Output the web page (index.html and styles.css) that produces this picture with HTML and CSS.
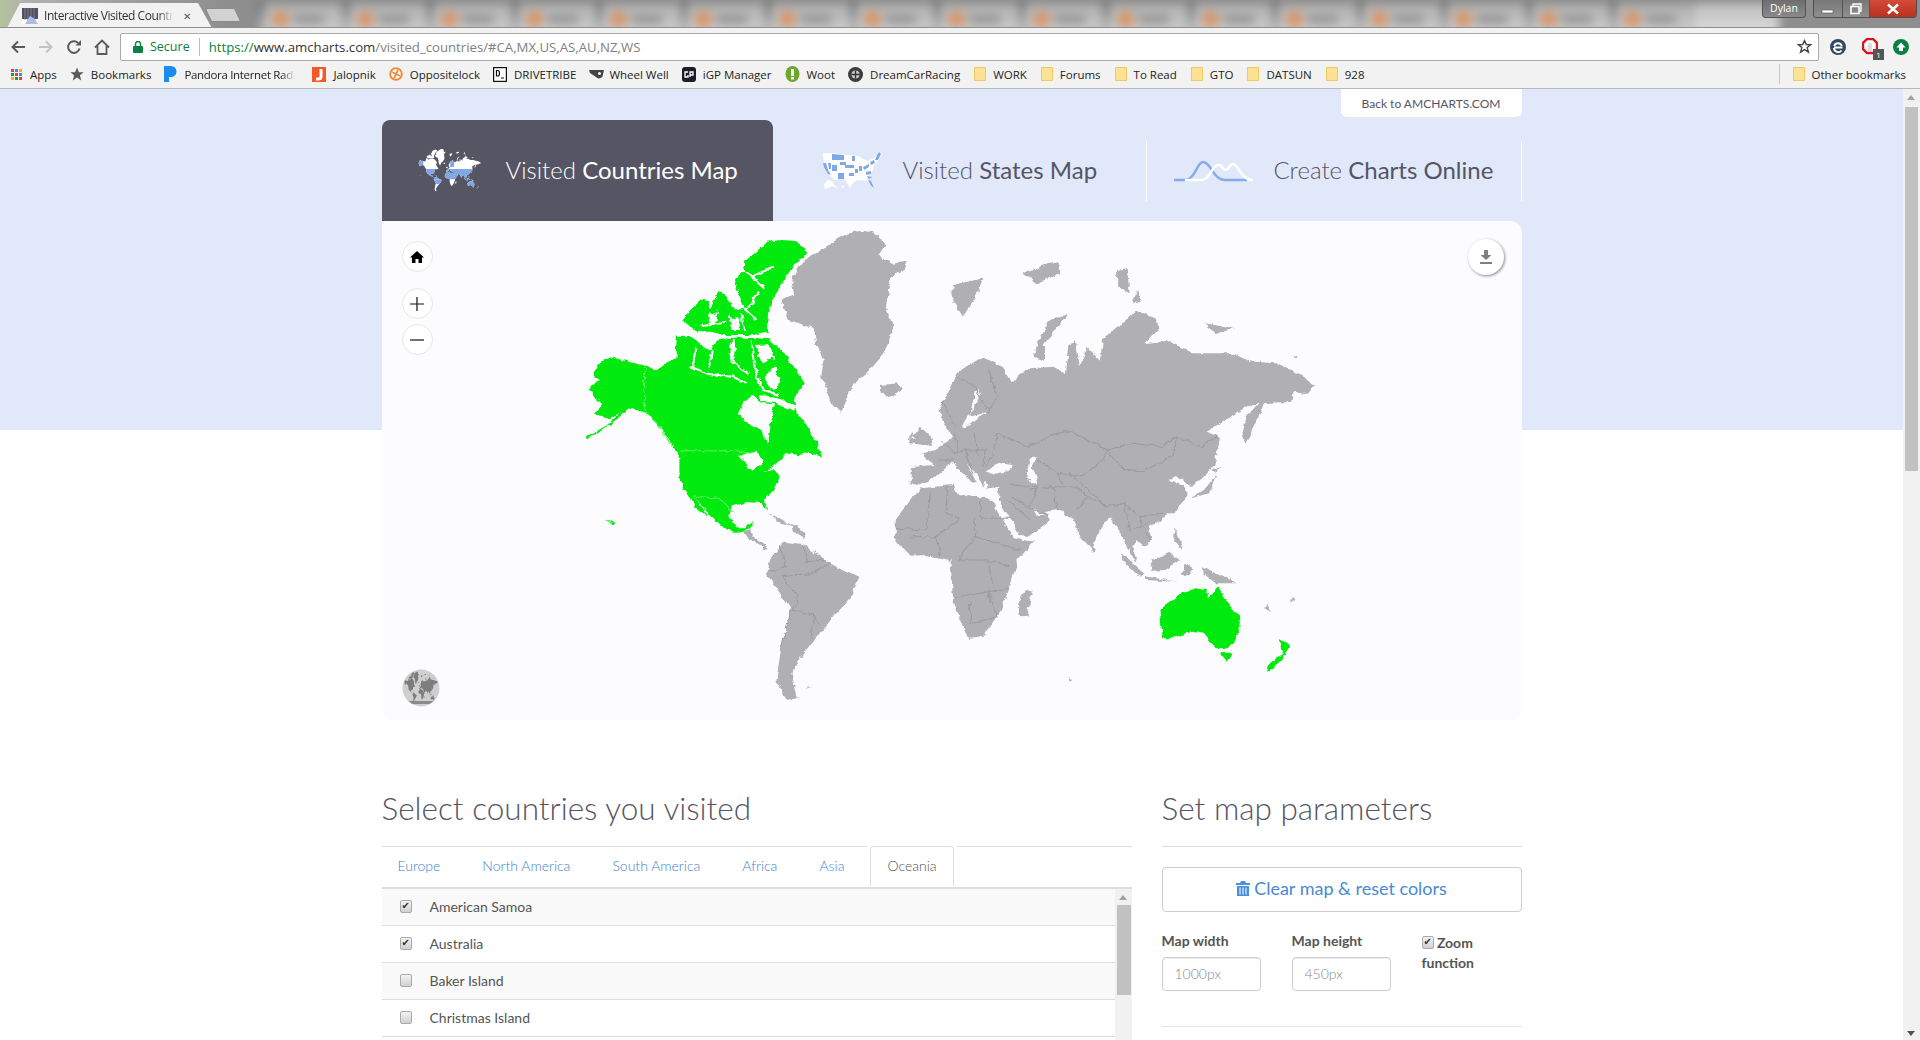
FILE: index.html
```html
<!DOCTYPE html>
<html lang="en">
<head>
<meta charset="utf-8">
<title>Interactive Visited Countries Map</title>
<link rel="stylesheet" href="styles.css">
</head>
<body>
<svg class="defs" width="0" height="0" aria-hidden="true">
  <defs>
    <filter id="coast" x="-2%" y="-2%" width="104%" height="104%">
      <feTurbulence type="fractalNoise" baseFrequency="0.07 0.05" numOctaves="3" seed="7"/>
      <feDisplacementMap in="SourceGraphic" scale="13" xChannelSelector="R" yChannelSelector="G"/>
      <feGaussianBlur stdDeviation="0.5 0.4"/>
    </filter>
    <g id="land-grey">
      <path d="M590 35L612 32L632 38L655 75L640 105L668 132L697 125L690 150L665 172L660 225L655 262L670 320L652 400L620 455L590 490L565 580L545 550L525 470L530 420L515 370L510 325L460 300L445 240L470 222L465 180L490 120L520 95L555 55Z"/>
      <path d="M705 742L725 738L755 735L735 712L728 700L755 690L775 665L790 650L770 605L763 570L775 530L800 455L850 410L888 440L912 490L890 522L920 470L940 445L990 440L1015 462L1022 375L1037 365L1045 440L1060 380L1085 422L1092 358L1160 272L1195 290L1206 320L1175 370L1225 362L1270 400L1345 400L1395 425L1440 430L1490 465L1518 495L1500 522L1475 515L1470 545L1415 550L1400 600L1378 672L1372 640L1380 590L1405 548L1380 560L1298 635L1325 650L1320 700L1312 745L1272 800L1240 768L1225 780L1255 800L1262 825L1240 868L1210 898L1182 920L1190 960L1175 980L1160 960L1150 980L1162 1032L1150 1012L1125 935L1105 890L1078 950L1070 990L1048 958L1035 905L1005 870L975 875L985 900L945 948L925 945L882 840L885 800L860 805L855 780L858 770L850 800L840 770L818 730L838 790L825 785L800 745L790 725L775 745L755 772L722 795L705 790Z"/>
      <path d="M675 900L700 845L725 805L790 795L800 825L860 835L868 840L912 955L952 965L920 1020L905 1100L880 1190L850 1250L820 1257L790 1140L785 1020L735 1005L705 1007L675 960Z"/>
      <path d="M420 1020L450 965L490 972L540 1030L602 1070L585 1130L550 1190L510 1260L490 1300L465 1360L478 1435L455 1440L435 1380L445 1280L465 1170L415 1060Z"/>
      <path d="M368 935L385 928L387 948L420 985L412 987L375 952Z"/>
      <path d="M418 880L455 905L470 920L440 905ZM468 915L495 935L490 955L470 935Z"/>
      <path d="M935 1110L948 1115L940 1190L925 1192L920 1150Z"/>
      <path d="M645 495L680 490L688 510L660 533L645 515Z"/>
      <path d="M725 620L745 650L750 678L700 670L715 640ZM708 635L700 660L715 655Z"/>
      <path d="M1320 760L1305 820L1270 835L1300 800ZM1310 750L1330 740L1318 755Z"/>
      <path d="M790 195L850 175L840 220L810 290L785 230Z"/>
      <path d="M930 160L975 135L1005 125L1005 160L960 190Z"/>
      <path d="M1020 282L985 300L960 370L952 410L975 422L975 370Z"/>
      <path d="M1120 150L1140 145L1145 220L1120 200ZM1160 210L1170 245L1150 250Z"/>
      <path d="M1295 310L1355 325L1320 340ZM1470 410L1485 405L1480 415Z"/>
      <path d="M1130 1000L1175 1060L1165 1070L1130 1020Z"/>
      <path d="M1172 1068L1240 1085L1175 1080Z"/>
      <path d="M1185 1025L1225 995L1245 1020L1215 1050L1190 1052Z"/>
      <path d="M1255 1030L1275 1045L1260 1070L1250 1060Z"/>
      <path d="M1290 1040L1360 1090L1320 1090L1295 1060Z"/>
      <path d="M1235 920L1255 990L1235 965Z"/>
      <path d="M1065 975L1075 985L1070 998Z"/>
      <path d="M1415 1165L1430 1175L1420 1155ZM1465 1140L1480 1135L1475 1145ZM1020 1375L1030 1380L1025 1385ZM495 1400L508 1398L500 1405Z"/>
    </g>
    <g id="land-green">
      <path d="M55 655L95 618L125 575L100 595L68 582L85 555L70 535L60 510L62 492L78 480L65 458L82 425L105 410L130 422L168 435L195 450L215 430L232 415L235 345L262 345L285 375L305 395L315 362L345 352L370 350L420 358L455 405L470 440L492 490L470 540L480 590L490 600L505 640L515 665L527 712L500 698L480 705L455 700L435 735L408 757L432 748L442 770L430 810L410 838L417 872L405 850L378 846L345 860L340 890L358 925L372 925L385 903L385 925L368 935L355 938L325 920L300 885L270 828L298 890L270 860L240 782L240 715L228 680L200 620L172 578L138 565L105 610Z"/>
      <path d="M245 300L262 270L290 232L302 268L318 215L335 225L350 268L372 268L352 195L350 180L370 155L370 125L395 95L415 65L445 60L470 62L492 85L495 102L470 135L455 170L440 205L425 245L420 285L418 335L385 345L290 345L260 320Z"/>
      <path d="M92 898L100 902L112 915L106 915Z"/>
      <path d="M1205 1170L1250 1120L1275 1105L1300 1110L1300 1135L1325 1100L1340 1145L1365 1190L1367 1240L1345 1285L1320 1285L1295 1240L1275 1232L1225 1255L1212 1255Z"/>
      <path d="M1325 1300L1350 1298L1340 1325Z"/>
      <path d="M1445 1255L1468 1280L1450 1320L1425 1355L1420 1340L1455 1300Z"/>
    </g>
    <clipPath id="band">
      <rect x="0" y="700" width="1568" height="340"/>
      <rect x="60" y="430" width="110" height="180"/>
      <rect x="800" y="430" width="90" height="200"/>
      <rect x="1190" y="1060" width="200" height="300"/>
      <rect x="400" y="1050" width="200" height="150"/>
    </clipPath>
  </defs>
</svg>

<header class="chrome">
  <div class="strip">
    <div class="strip-tab">
      <svg class="fav" width="16" height="16" viewBox="0 0 16 16"><rect width="16" height="16" fill="#fff"/><rect width="16" height="11" fill="#50505f"/><path d="M3 0v12M6 0v12M9 0v12M12 0v12" stroke="#7c7c8c"/><path d="M3 16L8 8L13 11L16 16Z" fill="#a9bde6"/></svg>
      <span class="strip-title">Interactive Visited Countr</span>
      <span class="strip-close">✕</span>
    </div>
    <div class="strip-new"></div>
    <div class="blur-tabs">
      <div class="bt"><i></i><b></b></div><div class="bt"><i></i><b></b></div><div class="bt"><i></i><b></b></div><div class="bt"><i></i><b></b></div><div class="bt"><i></i><b></b></div><div class="bt"><i></i><b></b></div><div class="bt"><i></i><b></b></div><div class="bt"><i></i><b></b></div><div class="bt"><i></i><b></b></div><div class="bt"><i></i><b></b></div><div class="bt"><i></i><b></b></div><div class="bt"><i></i><b></b></div><div class="bt"><i></i><b></b></div><div class="bt"><i></i><b></b></div><div class="bt"><i></i><b></b></div><div class="bt"><i></i><b></b></div><div class="bt"><i></i><b></b></div><div class="bt bt-empty"></div>
    </div>
    <div class="winbar">
      <span class="profile">Dylan</span>
      <div class="winctl">
        <span class="wc wc-min"><svg width="14" height="10" viewBox="0 0 14 10"><rect x="1" y="6" width="11" height="3" fill="#fff" stroke="#555" stroke-width=".6"/></svg></span>
        <span class="wc wc-max"><svg width="14" height="12" viewBox="0 0 14 12"><path d="M4 3V1H12V8H10" fill="none" stroke="#fff" stroke-width="1.4"/><rect x="2" y="3.5" width="8" height="7" fill="none" stroke="#fff" stroke-width="1.6"/></svg></span>
        <span class="wc wc-close"><svg width="14" height="12" viewBox="0 0 14 12"><path d="M2 1.5L12 10.5M12 1.5L2 10.5" stroke="#fff" stroke-width="2.6"/></svg></span>
      </div>
    </div>
  </div>
  <div class="toolbar">
    <svg class="nav" width="16" height="16" viewBox="0 0 16 16"><path d="M15 8H3M8 2.5L2.5 8L8 13.5" fill="none" stroke="#5a5a5a" stroke-width="2"/></svg>
    <svg class="nav" width="16" height="16" viewBox="0 0 16 16"><path d="M1 8H13M8 2.5L13.5 8L8 13.5" fill="none" stroke="#c4c4c4" stroke-width="2"/></svg>
    <svg class="nav" width="16" height="16" viewBox="0 0 16 16"><path d="M13.5 9.5A5.8 5.8 0 1 1 12 4" fill="none" stroke="#5a5a5a" stroke-width="2"/><path d="M9.5 6.5H15V1Z" fill="#5a5a5a"/></svg>
    <svg class="nav" width="16" height="16" viewBox="0 0 16 16"><path d="M1 8.5L8 1.5L15 8.5M3.5 7V15H12.500V7" fill="none" stroke="#5a5a5a" stroke-width="1.8"/></svg>
    <div class="omnibox">
      <svg width="10" height="12" viewBox="0 0 10 12"><rect y="5" width="10" height="7" rx="1" fill="#0b8043"/><path d="M2.500 5.500V3a2.500 2.500 0 0 1 5 0V5.500" fill="none" stroke="#0b8043" stroke-width="1.400"/></svg>
      <span class="secure">Secure</span>
      <span class="url"><span class="u-https">https://</span><span class="u-host">www.amcharts.com</span><span class="u-path">/visited_countries/#CA,MX,US,AS,AU,NZ,WS</span></span>
      <svg class="star" width="15" height="15" viewBox="0 0 24 24"><path d="M12 2.500L14.900 9H22L16.300 13.700L18.300 21L12 16.900L5.700 21L7.700 13.700L2 9H9.100Z" fill="none" stroke="#444" stroke-width="2.200"/></svg>
    </div>
    <div class="exts">
      <svg width="18" height="18" viewBox="0 0 18 18"><circle cx="9" cy="9" r="8" fill="#2f4a63"/><path d="M13.500 9.500H5M5.200 8A4 4 0 0 1 12.800 8M5 10A4.200 4.200 0 0 0 12.500 12.500" fill="none" stroke="#fff" stroke-width="2"/></svg>
      <span class="ext-block"><svg width="16" height="18" viewBox="0 0 16 18"><path d="M5 1H11L15 5V11L11 15H5L1 11V5Z" fill="#fff" stroke="#d8161c" stroke-width="2.400"/><path d="M6 13V6L8 4L10 6V13Z" fill="#ddd"/></svg><span class="ext-badge">1</span></span>
      <svg width="16" height="16" viewBox="0 0 16 16"><circle cx="8" cy="8" r="8" fill="#0b8043"/><path d="M8 3.500L12.500 8.500H10V12H6V8.500H3.500Z" fill="#fff"/></svg>
    </div>
  </div>
  <div class="bookmarks">
    <span class="bm"><svg width="13" height="13" viewBox="0 0 13 13"><path d="M1 1h3v3H1z" fill="#db4437"/><path d="M5 1h3v3H5z" fill="#4285f4"/><path d="M9 1h3v3H9z" fill="#f4b400"/><path d="M1 5h3v3H1z" fill="#0f9d58"/><path d="M5 5h3v3H5z" fill="#db4437"/><path d="M9 5h3v3H9z" fill="#4285f4"/><path d="M1 9h3v3H1z" fill="#f4b400"/><path d="M5 9h3v3H5z" fill="#0f9d58"/><path d="M9 9h3v3H9z" fill="#db4437"/></svg>Apps</span>
    <span class="bm"><svg width="14" height="14" viewBox="0 0 24 24"><path d="M12 1L15.300 9H23.500L17 14.300L19.200 23L12 18L4.800 23L7 14.300L.5 9H8.700Z" fill="#5a5a5a"/></svg>Bookmarks</span>
    <span class="bm bm-fade"><svg width="13" height="16" viewBox="0 0 13 16"><path d="M0 0H7A5.500 5.500 0 0 1 7 11H5V16H0Z" fill="#1a8cf0"/></svg><span class="bm-clip">Pandora Internet Radi</span></span>
    <span class="bm"><svg width="14" height="15" viewBox="0 0 14 15"><rect width="14" height="15" fill="#f15a24"/><path d="M9 2V10Q9 12 6 12H4" fill="none" stroke="#fff" stroke-width="3"/></svg>Jalopnik</span>
    <span class="bm"><svg width="14" height="14" viewBox="0 0 14 14"><circle cx="7" cy="7" r="5.800" fill="#fff" stroke="#f08a3c" stroke-width="2"/><path d="M3 5L11 9M9 3L5 11" stroke="#f08a3c" stroke-width="1.800"/></svg>Oppositelock</span>
    <span class="bm"><svg width="14" height="15" viewBox="0 0 14 15"><rect x=".6" y=".6" width="12.800" height="13.800" fill="#fff" stroke="#111" stroke-width="1.200"/><path d="M3.500 3.500V9H5Q6.500 9 6.500 6.200Q6.500 3.500 5 3.500ZM8 11H11" fill="none" stroke="#111" stroke-width="1.200"/></svg>DRIVETRIBE</span>
    <span class="bm bm-tight"><svg width="15" height="10" viewBox="0 0 15 10"><path d="M0 1H15L14 5A4 4 0 0 1 7 8L1 4Z" fill="#444"/><circle cx="10.500" cy="4.500" r="1.500" fill="#fff"/></svg>Wheel Well</span>
    <span class="bm"><svg width="14" height="15" viewBox="0 0 14 15"><rect width="14" height="15" rx="3" fill="#1c1c2a"/><path d="M6 5H3V10H6V8M8 10V5H11V8H8" fill="none" stroke="#fff" stroke-width="1.300"/></svg>iGP Manager</span>
    <span class="bm"><svg width="15" height="16" viewBox="0 0 15 16"><ellipse cx="7.500" cy="8" rx="7" ry="8" fill="#6aa82c"/><rect x="6" y="3" width="3" height="7" fill="#fff"/><rect x="6" y="11" width="3" height="2.500" fill="#fff"/></svg>Woot</span>
    <span class="bm"><svg width="15" height="15" viewBox="0 0 15 15"><circle cx="7.500" cy="7.500" r="7.500" fill="#3c3c3c"/><circle cx="7.500" cy="7.500" r="4" fill="#ccc"/><path d="M7.500 3.500V11.500M3.500 7.500H11.500" stroke="#333" stroke-width="1.400"/></svg>DreamCarRacing</span>
    <span class="bm bm-f"><svg class="folder" width="12" height="14" viewBox="0 0 12 14"><path d="M.5 .5H11.500V13.500H.5Z" fill="#fde293" stroke="#f1c95e"/></svg>WORK</span>
    <span class="bm bm-f"><svg class="folder" width="12" height="14" viewBox="0 0 12 14"><path d="M.5 .5H11.500V13.500H.5Z" fill="#fde293" stroke="#f1c95e"/></svg>Forums</span>
    <span class="bm bm-f"><svg class="folder" width="12" height="14" viewBox="0 0 12 14"><path d="M.5 .5H11.500V13.500H.5Z" fill="#fde293" stroke="#f1c95e"/></svg>To Read</span>
    <span class="bm bm-f"><svg class="folder" width="12" height="14" viewBox="0 0 12 14"><path d="M.5 .5H11.500V13.500H.5Z" fill="#fde293" stroke="#f1c95e"/></svg>GTO</span>
    <span class="bm bm-f"><svg class="folder" width="12" height="14" viewBox="0 0 12 14"><path d="M.5 .5H11.500V13.500H.5Z" fill="#fde293" stroke="#f1c95e"/></svg>DATSUN</span>
    <span class="bm bm-f"><svg class="folder" width="12" height="14" viewBox="0 0 12 14"><path d="M.5 .5H11.500V13.500H.5Z" fill="#fde293" stroke="#f1c95e"/></svg>928</span>
    <span class="bm bm-other"><svg class="folder" width="12" height="14" viewBox="0 0 12 14"><path d="M.5 .5H11.500V13.500H.5Z" fill="#fde293" stroke="#f1c95e"/></svg>Other bookmarks</span>
  </div>
</header>

<div class="viewport">
  <main class="page">
    <div class="wrap">
      <div class="backrow"><a class="back">Back to AMCHARTS.COM</a></div>
      <nav class="maptabs">
        <div class="mt mt-1 is-active">
          <svg class="ic-world" width="67" height="45" viewBox="0 0 1568 1500" preserveAspectRatio="none"><use href="#land-grey" fill="#fff"/><use href="#land-green" fill="#fff"/><g clip-path="url(#band)"><use href="#land-grey" fill="#7fa9e6"/><use href="#land-green" fill="#7fa9e6"/></g></svg>
          <span><span class="lt">Visited</span> Countries Map</span>
        </div>
        <div class="mt mt-2">
          <svg class="ic-us" width="60" height="38" viewBox="0 0 60 38">
            <path d="M1 1L12 1L26 3L36 4L41 7L46 9L52 6L57 0L60 2L56 9L52 13L51 18L48 23L44 26L49 31L52 36L49 35L46 29L35 28L31 31L28 36L25 31L22 26L13 28L7 23L2 14Z" fill="#fff"/>
            <path d="M10 2L22 3L22 8L10 8ZM1 11L4 11L6 18L9 23L6 22L2 15ZM6 11L9 11L9 17L7 17ZM10 13L15 13L15 19L10 19ZM16 21L22 21L22 27L16 27ZM18 10L24 10L24 13L18 13ZM23 13L32 13L32 16L23 16ZM30 4L33 4L33 9L30 9ZM27 21L32 21L32 24L27 24ZM33 17L36 17L36 21L33 21ZM37 14L40 14L40 19L37 19ZM41 15L47 12L47 15L42 18ZM44 20L49 19L49 22L44 23ZM45 24L50 25L47 27ZM46 28L49 29L52 36L49 34ZM53 8L55 3L57 0L59 2L56 8ZM48 10L52 8L53 11L49 13Z" fill="#7fa9e6"/>
            <path d="M2 32L6 28L10 29L12 33L17 37L10 34L3 37ZM19 34L22 34L21 36Z" fill="#fff"/>
          </svg>
          <span><span class="lt">Visited</span> States Map</span>
        </div>
        <div class="mt mt-3">
          <svg class="ic-chart" width="81" height="22" viewBox="0 0 81 22">
            <path d="M1 20H12C22 20 24 2 30 2C38 2 40 20 52 20H68C72 20 73 20 74 20" fill="none" stroke="#82ade8" stroke-width="2.500"/>
            <path d="M12 20H28C38 20 38 5 46 5C50 5 49 10 53 10C56 10 56 4 60 4C65 4 68 20 80 20" fill="none" stroke="#fff" stroke-width="2.500"/>
          </svg>
          <span><span class="lt">Create</span> Charts Online</span>
        </div>
      </nav>

      <section class="mapcard">
        <svg class="worldmap" width="780" height="500" viewBox="0 0 1568 1500" preserveAspectRatio="none">
          <g filter="url(#coast)">
            <use href="#land-grey" class="land"/>
            <g class="sea">
              <path d="M838 505L845 525L822 590L838 585L860 575L835 600L815 625L806 622L825 575Z"/>
              <path d="M858 755L880 728L905 735L905 752L870 762Z"/>
              <path d="M945 715L958 712L950 740L962 790L945 790L938 760Z"/>
              <path d="M950 865L975 885L960 890Z"/>
            </g>
            <g class="borders">
              <path d="M880 640L940 680L1000 640L1025 632L1060 660L1100 690L1150 670L1210 680L1240 650L1290 680L1320 650"/>
              <path d="M1100 690L1135 750L1170 755L1230 710L1240 650"/>
              <path d="M1025 760L1060 810L1100 860L1135 850L1165 890L1210 880M960 720L1000 760L1050 770L1090 720L1100 690"/>
              <path d="M945 810L990 800L1000 870M990 800L1040 800L1060 830L1040 870M1000 760L1015 800M1060 830L1100 860"/>
              <path d="M1135 850L1145 935M1165 890L1185 960M1185 905L1155 930"/>
              <path d="M880 640L870 700L855 740M770 665L795 700L815 690L860 690M795 640L800 700M815 690L830 760M835 640L840 710M855 690L850 740M760 720L790 720"/>
              <path d="M770 545L795 620M800 470L830 495L860 570M860 450L880 530L860 580"/>
              <path d="M905 795L960 800L945 860L905 830M935 860L980 885M900 840L945 900"/>
              <path d="M745 815L735 930L675 925M780 800L775 880L805 895M845 835V895L915 895M805 895L755 950L705 950M835 950L835 895M755 950L765 1005M835 950L800 1020M835 950L925 990M800 1020L860 1020L870 1090M860 1020L905 1040M795 1135L860 1115L905 1105M825 1140L825 1210L880 1190M860 1115L880 1190"/>
              <path d="M440 975L455 1040L415 1055M490 975L495 1025L530 1020M540 1030L510 1060L445 1070L480 1130L470 1170L510 1185L520 1215M465 1170L445 1280M510 1185L505 1255"/>
            </g>
            <use href="#land-green" class="green"/>
            <path class="green-tail" d="M55 655L95 618L125 578"/>
            <g class="sea">
              <path d="M358 580L368 545L388 525L402 550L430 552L424 610L418 672L405 632L378 612Z"/>
              <path d="M400 525L432 530L478 560L470 575L430 548L405 545Z"/>
              <path d="M410 470L432 440L445 490L425 510Z"/>
              <path d="M360 705L395 695L412 720L400 735L385 755L370 720Z"/>
              <path d="M420 740L480 700L460 725Z"/>
              <path d="M300 275L318 300L300 320Z"/>
              <path d="M340 300L360 290L362 330L345 330Z"/>
              <path d="M270 345L290 330L330 345Z"/>
              <path d="M340 375L352 365L350 410L342 420Z"/>
              <path d="M395 375L420 372L430 410L405 430Z"/>
            </g>
            <g class="green-lines">
              <path d="M360 135L385 170L410 205M385 170L430 140M400 215L380 260L372 268L395 300"/>
              <path d="M300 300L322 272M340 285L352 325M285 318L332 305M365 280L370 335M235 347L420 352"/>
              <path d="M262 440L300 462L345 470L378 490M272 382L268 440M305 395L300 440M350 355L345 420L378 462M385 362L392 425L395 470L410 510L440 525M420 385L432 420"/>
            </g>
            <path class="state-line" d="M243 692L355 692L385 700M170 440V575L195 610L225 680M270 828L320 835L345 875"/>
          </g>
        </svg>

        <button class="ctl ctl-home" type="button" aria-label="Home"><svg width="14" height="14" viewBox="0 0 14 14"><path d="M7 1L14 7.500H12V13H8.500V9H5.500V13H2V7.500H0Z" fill="#000"/></svg></button>
        <button class="ctl ctl-plus" type="button" aria-label="Zoom in"><svg width="14" height="14" viewBox="0 0 14 14"><path d="M7 0V14M0 7H14" stroke="#111" stroke-width="1.200"/></svg></button>
        <button class="ctl ctl-minus" type="button" aria-label="Zoom out"><svg width="14" height="14" viewBox="0 0 14 14"><path d="M0 7H14" stroke="#111" stroke-width="1.200"/></svg></button>
        <button class="ctl-dl" type="button" aria-label="Download"><svg width="14" height="14" viewBox="0 0 14 14"><path d="M5 0H9V5H12.500L7 10L1.500 5H5ZM1 12H13V14H1Z" fill="#808080"/></svg></button>
        <div class="globe">
          <svg width="38" height="38" viewBox="0 0 38 38"><defs><clipPath id="gclip"><circle cx="19" cy="19" r="18"/></clipPath></defs><circle cx="19" cy="19" r="18.500" fill="#cfcfcf"/><g clip-path="url(#gclip)"><svg x="1" y="2" width="36" height="34" viewBox="0 0 1568 1500" preserveAspectRatio="none"><use href="#land-grey" fill="#7d7d7d"/><use href="#land-green" fill="#7d7d7d"/></svg><rect x="4" y="32" width="30" height="3" fill="#8a8a8a"/></g></svg>
        </div>
      </section>

      <div class="panels">
        <section class="pan-left">
          <h2>Select countries you visited</h2>
          <ul class="regions">
            <li><a>Europe</a></li>
            <li><a>North America</a></li>
            <li><a>South America</a></li>
            <li><a>Africa</a></li>
            <li><a>Asia</a></li>
            <li class="is-on"><a>Oceania</a></li>
          </ul>
          <div class="listbox">
            <div class="rows">
              <label class="row"><input type="checkbox" checked>American Samoa</label>
              <label class="row"><input type="checkbox" checked>Australia</label>
              <label class="row"><input type="checkbox">Baker Island</label>
              <label class="row"><input type="checkbox">Christmas Island</label>
            </div>
            <div class="list-scroll"><span class="arrow-up"></span><span class="list-thumb"></span></div>
          </div>
        </section>
        <section class="pan-right">
          <h2>Set map parameters</h2>
          <div class="pr-body">
            <button class="clear" type="button"><svg width="14" height="15" viewBox="0 0 14 15"><path d="M5 0H9L10 2H14V4H0V2H4ZM1 5H13V15H1Z" fill="#4a90d9"/><path d="M4 6.500V13.500M7 6.500V13.500M10 6.500V13.500" stroke="#fff"/></svg> Clear map &amp; reset colors</button>
            <div class="params">
              <div class="fld"><label>Map width</label><input type="text" placeholder="1000px"></div>
              <div class="fld"><label>Map height</label><input type="text" placeholder="450px"></div>
              <label class="zoomfn"><input type="checkbox" checked> Zoom function</label>
            </div>
            <hr class="rule">
          </div>
        </section>
      </div>
    </div>
  </main>
  <aside class="vscroll"><span class="arrow-up"></span><span class="thumb"></span><span class="arrow-down"></span></aside>
</div>
</body>
</html>
```
FILE: styles.css
```css
* { box-sizing: border-box; }
html, body { margin: 0; height: 100%; }
body { width: 1920px; height: 1040px; overflow: hidden; font-family: Lato, "Open Sans", sans-serif; color: #555; background: #fff; }
.defs { position: absolute; }

/* browser chrome */
.chrome { height: 89px; font-family: "Open Sans", "Noto Sans", sans-serif; font-size: 12px; color: #333; background: #f2f2f2; border-bottom: 1px solid #b8b8b8; }
.strip { position: relative; height: 28px; display: flex; overflow: hidden; background: linear-gradient(90deg, #b5c49c 0, #b0b0b0 24px, #8e8e8e 230px); border-bottom: 1px solid #8f8f8f; }
.strip-tab { flex: none; width: 212px; margin-left: 7px; height: 25px; margin-top: 3px; padding-left: 15px; padding-right: 18px; display: flex; align-items: center; gap: 6px; background: #f2f2f2; clip-path: polygon(0 100%, 13px 0, 191px 0, 205px 100%); position: relative; z-index: 2; }
.fav { flex: none; }
.strip-title { flex: none; white-space: nowrap; font-size: 12px; letter-spacing: -.45px; -webkit-mask-image: linear-gradient(90deg, #000 88%, transparent); mask-image: linear-gradient(90deg, #000 88%, transparent); }
.strip-close { font-size: 10px; color: #555; margin-left: 3px; }
.strip-new { flex: none; width: 30px; height: 14px; margin: 8px 0 0 -11px; background: #d2d2d2; border: 1px solid #8c8c8c; border-radius: 2px; transform: skewX(25deg); position: relative; z-index: 2; }
.blur-tabs { flex: none; display: flex; margin-left: 20px; filter: blur(5px); background: #6a6a6a; }
.bt { flex: none; width: 84.500px; height: 32px; display: flex; align-items: center; gap: 5px; padding-left: 14px; padding-top: 3px; margin-top: 2px; background: linear-gradient(#6a6a6a, #bdbdbd) left top / 6px 100% no-repeat, linear-gradient(#aaa, #cfcfcf); }
.bt i { width: 17px; height: 17px; border-radius: 50%; background: #d9966a; }
.bt b { width: 30px; height: 7px; background: #8e8e8e; }
.bt-empty { background: linear-gradient(#bbb, #dedede); }
.winbar { position: absolute; top: 0; right: 3px; display: flex; gap: 7px; z-index: 3; }
.profile { width: 44px; height: 18px; border: 1px solid #555; border-top: 0; border-radius: 0 0 4px 4px; background: linear-gradient(#6e6e6e, #8a8a8a); color: #fff; font-size: 10.500px; line-height: 17px; text-align: center; }
.winctl { display: flex; height: 18px; border: 1px solid #4f4f4f; border-top: 0; border-radius: 0 0 4px 4px; overflow: hidden; }
.wc { display: flex; align-items: center; justify-content: center; border-right: 1px solid #555; }
.wc-min { width: 29px; background: linear-gradient(#777, #8f8f8f); }
.wc-max { width: 27px; background: linear-gradient(#777, #8f8f8f); }
.wc-close { width: 46px; border: 0; background: linear-gradient(#d44b38, #b8321f); }
.toolbar { height: 32px; display: flex; align-items: center; padding: 5px 0 0 10px; background: #f2f2f2; }
.nav { flex: none; margin-right: 12px; }
.omnibox { flex: none; width: 1699px; height: 28px; margin-left: -2px; padding-left: 12px; padding-right: 6px; display: flex; align-items: center; background: #fff; border: 1px solid #a9a9a9; border-radius: 2px; }
.secure { margin-left: 7px; padding-right: 9px; border-right: 1px solid #bbb; font-size: 12.500px; line-height: 18px; color: #0b8043; }
.url { margin-left: 9px; font-size: 13.200px; white-space: nowrap; }
.u-https { color: #0b8043; }
.u-host { color: #333; }
.u-path { color: #808080; }
.star { margin-left: auto; }
.exts { flex: none; display: flex; align-items: center; margin-left: 10px; gap: 15px; }
.ext-block { position: relative; display: flex; }
.ext-badge { position: absolute; right: -6px; bottom: -4px; width: 11px; height: 11px; background: #555; color: #fff; font-size: 8px; line-height: 11px; text-align: center; }
.bookmarks { height: 28px; display: flex; align-items: center; padding-left: 10px; gap: 13px; background: #f2f2f2; font-size: 11.500px; color: #222; }
.bm { display: flex; align-items: center; gap: 7px; white-space: nowrap; }
.bm-tight { gap: 5px; }
.bm-fade { margin-right: 4px; }
.bm-fade .bm-clip { letter-spacing: -.33px; -webkit-mask-image: linear-gradient(90deg, #000 88%, transparent); mask-image: linear-gradient(90deg, #000 88%, transparent); }
.bm-f { margin-left: 1px; }
.bm-other { margin-left: auto; margin-right: 14px; padding-left: 13px; border-left: 1px solid #c8c8c8; height: 20px; }

/* page */
.viewport { height: 951px; display: flex; overflow: hidden; }
.page { flex: 1; min-width: 0; background: linear-gradient(#e1e8fa 341px, #fff 341px); }
.wrap { width: 1140px; margin: 0 auto; }
.backrow { height: 31px; display: flex; justify-content: flex-end; }
.back { width: 181px; height: 28px; background: #fff; border-radius: 0 0 6px 6px; color: #555564; font-size: 12px; line-height: 30px; text-align: center; }
.maptabs { height: 101px; display: flex; font-size: 24px; color: #555564; }
.mt { display: flex; align-items: center; }
.mt > span { margin-bottom: 2px; }
.lt { font-weight: 300; }
.mt-1 { width: 391px; padding-left: 34px; gap: 23px; background: #555564; color: #fff; border-radius: 8px 8px 0 0; }
.mt-2 { width: 374px; padding-left: 49px; gap: 21px; background: linear-gradient(#fff, #fff) right center / 1px 60px no-repeat; }
.mt-3 { width: 375px; padding-left: 26px; gap: 20px; background: linear-gradient(#fff, #fff) right center / 1px 60px no-repeat; }
.mapcard { position: relative; height: 499px; background: #fcfcfe; border-radius: 0 12px 12px 12px; }
.worldmap { position: absolute; left: 178px; top: -1px; }
.land { fill: #b0b0b2; }
.green { fill: #06ea0d; }
.green-tail { fill: none; stroke: #06ea0d; stroke-width: 2; vector-effect: non-scaling-stroke; }
.sea { fill: #fcfcfe; }
.borders path { fill: none; stroke: #9a9a9c; stroke-width: 1; vector-effect: non-scaling-stroke; }
.green-lines path { fill: none; stroke: #fcfcfe; stroke-width: 2; vector-effect: non-scaling-stroke; }
.state-line { fill: none; stroke: #5bf05f; stroke-width: 1; vector-effect: non-scaling-stroke; }
.ctl { position: absolute; left: 20px; width: 31px; height: 31px; padding: 0; display: flex; align-items: center; justify-content: center; background: #fff; border: 1px solid #e6e6e6; border-radius: 50%; }
.ctl-home { top: 20px; }
.ctl-plus { top: 67px; }
.ctl-minus { top: 103px; }
.ctl-dl { position: absolute; right: 18px; top: 18px; width: 36px; height: 36px; padding: 0; display: flex; align-items: center; justify-content: center; background: #fff; border: 0; border-radius: 50%; box-shadow: 1px 1px 3px rgba(0,0,0,.45); }
.globe { position: absolute; left: 20px; top: 448px; width: 38px; height: 38px; filter: blur(.5px); }
.panels { display: flex; gap: 30px; margin-top: 71px; }
.pan-left { width: 750px; }
.pan-right { width: 360px; }
h2 { margin: 0 0 19px; height: 36px; font-size: 31.500px; line-height: 34px; font-weight: 300; color: #555564; }
.regions { list-style: none; margin: 0; padding: 0; height: 41px; display: flex; gap: 10px; border-top: 1px solid #ddd; font-size: 14px; font-weight: 300; color: #3f7fcc; }
.regions a { display: block; padding: 0 16px; line-height: 38px; }
.regions .is-on { position: relative; height: 40px; margin-top: -1px; background: #fff; border: 1px solid #ddd; border-bottom: 0; border-radius: 4px 4px 0 0; color: #555; box-shadow: 5px 0 0 #fff, -5px 0 0 #fff; }
.regions .is-on a { line-height: 38px; padding: 0 16px; }
.listbox { display: flex; border-top: 2px solid #ddd; height: 300px; }
.rows { flex: 1; }
.row { display: flex; align-items: center; height: 37px; padding-left: 18px; padding-bottom: 1px; gap: 18px; border-bottom: 1px solid #ddd; font-size: 14px; color: #555; }
.row:nth-child(odd) { background: #f9f9f9; }
.row input, .zoomfn input { appearance: none; -webkit-appearance: none; flex: none; width: 12px; height: 13px; margin: 0; position: relative; border: 1px solid #a9a9a9; border-radius: 2px; background: linear-gradient(#f3f3f3, #d0d0d0); }
.row input:checked::after, .zoomfn input:checked::after { content: "✔"; position: absolute; left: 1px; top: -2px; font: 10px/14px "DejaVu Sans", sans-serif; color: #333; }
.list-scroll { flex: none; width: 17px; position: relative; background: #f1f1f1; }
.arrow-up { position: absolute; left: 4px; top: 6px; border: 4px solid transparent; border-top: 0; border-bottom: 5px solid #a3a3a3; }
.list-thumb { position: absolute; left: 2px; right: 1px; top: 16px; height: 90px; background: #c1c1c1; }
.pr-body { border-top: 1px solid #ddd; padding-top: 20px; }
.clear { display: flex; align-items: center; justify-content: center; gap: 4px; width: 360px; height: 45px; padding: 0 0 3px; background: #fff; border: 1px solid #ccc; border-radius: 4px; font: 400 18px Lato, sans-serif; color: #4a8ad4; }
.params { display: flex; margin-top: 20px; height: 94px; }
.fld { width: 130px; display: flex; flex-direction: column; }
.fld label { height: 25px; font-size: 14px; line-height: 18px; font-weight: 700; color: #555; }
.fld input { width: 99px; height: 34px; padding: 0 12px 2px; border: 1px solid #ccc; border-radius: 4px; font: 300 14px Lato, sans-serif; box-shadow: inset 0 1px 1px rgba(0,0,0,.075); }
.fld input::placeholder { color: #888; }
.zoomfn { width: 90px; padding-top: 1px; font-size: 14px; line-height: 20px; font-weight: 700; color: #555; }
.zoomfn input { display: inline-block; vertical-align: -1px; }
.rule { margin: 0; border: 0; border-top: 1px solid #e5e5e5; }
.vscroll { flex: none; width: 17px; position: relative; background: #f1f1f1; }
.vscroll .arrow-up { top: 6px; }
.thumb { position: absolute; left: 2px; right: 2px; top: 18px; height: 364px; background: #c1c1c1; }
.arrow-down { position: absolute; left: 4px; bottom: 4px; border: 4px solid transparent; border-bottom: 0; border-top: 5px solid #505050; }
```
